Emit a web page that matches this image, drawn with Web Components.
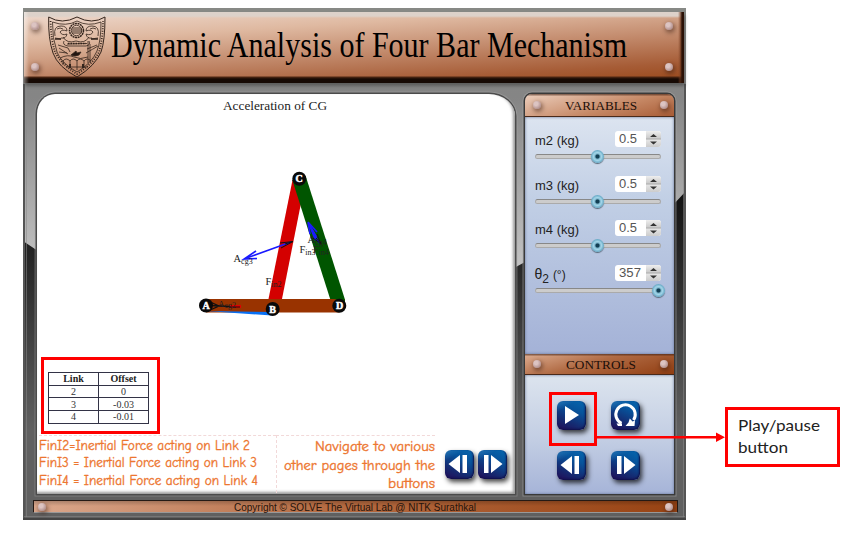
<!DOCTYPE html>
<html lang="en">
<head>
<meta charset="utf-8">
<title>Dynamic Analysis of Four Bar Mechanism</title>
<style>
html,body{margin:0;background:#fff;width:845px;height:534px;overflow:hidden}
</style>
</head>
<body>
<lab-page></lab-page>
<script>
const define = (name, html, setup) => customElements.define(name, class extends HTMLElement {
  connectedCallback() {
    if (this.shadowRoot) return;
    const t = document.createElement('template');
    t.innerHTML = typeof html === 'function' ? html(this) : html;
    this.attachShadow({mode: 'open'}).append(t.content.cloneNode(true));
  }
});
const at = (el, n, d) => el.getAttribute(n) ?? d;

/* One line of text set to an exact width. */
define('fit-text', el => `<style>:host{display:block;width:${at(el,'w')}px;height:${at(el,'h')}px;flex:none}svg{display:block;overflow:visible}</style>
<svg width="${at(el,'w')}" height="${at(el,'h')}"><text x="0" y="${at(el,'base')}" font-size="${at(el,'size')}" fill="currentColor" stroke="currentColor" stroke-width="${at(el,'heavy','0')}" textLength="${at(el,'w')}" lengthAdjust="spacingAndGlyphs">${at(el,'text')}</text></svg>`);

define('metal-rivet', `<style>:host{display:block;width:8px;height:8px;border-radius:50%;flex:none;background:radial-gradient(circle at 38% 35%,#dcc4c2 0 25%,#bd9e9c 60%,#8f7472);box-shadow:1px 2px 4px 1px #3a1c1080}</style>`);

define('nitk-crest', `<style>:host{display:block;width:58px;height:63px;flex:none}svg{display:block}</style>
<svg width="58" height="63" viewBox="0 0 58 63" fill="none" stroke="#33241c" stroke-width=".8">
<path d="M.7 1Q14 9 29 1Q44 9 57 1Q57 25 53 36Q47 50 29 61Q10 51 5 37Q0 22 .7 1Z" stroke-width="1"/>
<path d="M4.500 6Q18 11 29 5Q40 11 53 6Q53 25 49 35Q44 47 29 56Q13 47 9 36Q4 22 4.500 6Z"/>
<path d="M2.600 5Q3 24 7 36Q13 48 29 58Q44 49 51 36Q55 22 55 5" stroke-width="1.800" stroke-dasharray="1 1.500"/>
<circle cx="28.500" cy="14.500" r="7" stroke-width="1.500" stroke-dasharray="2 .6"/><circle cx="28.500" cy="14.500" r="5.200"/>
<path d="M25 11v7M27 11v7M29 11v7M31 11v7M33 12v5" stroke-width=".9"/>
<path d="M7 20q-2-10 6-10q6 0 6 5q-5-2-7 1q2 4 7 2q-1 5-6 4M50 20q2-10-6-10q-6 0-6 5q5-2 7 1q-2 4-7 2q1 5 6 4M7 22l6 1M43 23l7-1M9 13q3-2 6 0M42 13q3-2 6 0"/>
<path d="M7 23h6M43 23h7" stroke-width="1.500"/>
<path d="M15 21q4 7 13 4q9 3 13-4M16 25q-2 4 4 5h18q5-1 3-5M19 28l20-.5"/>
<path d="M20 27.500h18" stroke-width="1.300" stroke-dasharray="1.500 1"/>
<path d="M10 29l10 3 2 4M11 32l9 6M38 37q7-4 12-7M39 33l10-4M40 25v22M42 28v18M11 36l8 1"/>
<path d="M23 39l5-4 1 2 4-1-2 3q-4 2-8 0Z" fill="#221510"/>
<path d="M12 42q8-4 14-1t14 0M15 45q3-4 7 0q3-4 7 0q3-4 7 0q3-4 7 0M15 49v-4M18 51h22M22 45v7M29 45v9M36 45v7"/>
<path d="M22 48v4M35 48v4" stroke-width="2"/>
</svg>`);

define('lab-header', `<style>:host{box-sizing:border-box;display:flex;width:660px;height:71px;flex:none;padding:4px 9px 5px 5px;color:#000;background:
linear-gradient(90deg,#ffffff66,#ffffff00 5px),
linear-gradient(270deg,#2a1005 0 2px,#7a402488 4px,#ffffff00 6px),
linear-gradient(#ddd2ca 0 4px,#ffffff00 6px 64px,#4f2814 65px,#170a04 67px),
linear-gradient(176.500deg,#efdbd0 0,#dfb9a1 28%,#c38b6d 55%,#a65c36 82%,#984718);box-shadow:1px 3px 3px #2226}
.r{display:flex;flex-direction:column;justify-content:space-between;width:10px;padding:6px 0 7px 2px}
nitk-crest{margin-left:7px}fit-text{margin:10px 0 0 5px;font-family:"Liberation Serif",serif}
.e{margin-left:auto;padding-right:1px;width:9px}</style>
<div class="r"><metal-rivet></metal-rivet><metal-rivet></metal-rivet></div><nitk-crest></nitk-crest>
<fit-text w="516" h="44" base="31" size="36" text="Dynamic Analysis of Four Bar Mechanism"></fit-text>
<div class="r e"><metal-rivet></metal-rivet><metal-rivet></metal-rivet></div>`);

const icons = {
  play: '<path d="M8 5v18l14-9Z"/>',
  prev: '<path d="M15 5v18L3.500 14ZM17.500 5h4.500v18h-4.500Z"/>',
  next: '<path d="M13 5v18l11.500-9ZM6 5h4.500v18H6Z"/>',
  reset: '<path d="M10.500 22.300A9.700 9.700 0 1 1 22.500 19" fill="none" stroke="#fff" stroke-width="3"/><path d="M14.500 25H23.500L24 19.500L21.500 20.500L18.800 17.500L17.500 21.500Z"/><path d="M5.500 22.500H11V25H7Z"/>'
};
define('icon-button', el => `<style>:host{display:block;width:29px;height:29px;border-radius:6px;flex:none;background:linear-gradient(150deg,#2674b4,#ffffff00 25%),linear-gradient(25deg,#230b55 0,#152b72 32%,#07539b 67%,#0668b0);box-shadow:2px 3px 5px #000b,inset -1px -1px 2px #10104a}svg{display:block}</style><svg width="29" height="29" viewBox="0 0 29 29" fill="#fff">${icons[at(el,'icon')]}</svg>`);

define('offset-table', `<style>:host{box-sizing:border-box;display:block;width:119px;height:77px;border:3px solid #f00;padding:12px 0 0 4px;font:10px/11px "Liberation Serif",serif;color:#333}
table{border-collapse:collapse;table-layout:fixed;width:101px}td,th{border:1px solid #333346;padding:0;height:11.700px;text-align:center;line-height:11px}th{color:#222}</style>
<table><tr><th>Link</th><th>Offset</th></tr><tr><td>2</td><td>0</td></tr><tr><td>3</td><td>-0.03</td></tr><tr><td>4</td><td>-0.01</td></tr></table>`);

define('linkage-diagram', `<style>:host{display:block;height:241px;flex:none}svg{display:block}text{font-family:"Liberation Serif",serif}</style>
<svg width="478" height="241" viewBox="37 116 478 241">
<path d="M268.300 300L292.500 180L306 178L281.800 300Z" fill="#d40000"/>
<path d="M299 178L337.800 300" stroke="#005500" stroke-width="14"/>
<path d="M206 299H345V305L339 312.500H206Z" fill="#993300"/><path d="M330.500 298H344.500L345 301L344 304L338 300Z" fill="#005500"/>
<path d="M206 311L272 312V315.500Z" fill="#0870f5"/>
<g fill="none" stroke="#1a1aff" stroke-width="1.600"><path d="M291 242L244 259M256 251L244 259L257 258.500M308 222L319 243M308 222L310 234M308 222L317 232"/><path d="M309 224l7 12-1 3Z" fill="#1a1aff"/></g>
<g fill="none" stroke="#111" stroke-width="1"><path d="M293 241.500L280 243M293 241.500L281 248M285 244l8-2.500M321 244l-4-10M321 244l-8-6M316 238l5 6"/><path d="M208 301L219 306L208 311M210 305.500L240 307" stroke-width="1.300"/></g>
<path d="M230 306.500H241" stroke="#e00000" stroke-width="3"/><path d="M229 307H240" stroke="#211" stroke-width="1"/>
<g fill="#222" font-size="10.500"><text x="233.500" y="262">A<tspan font-size="8" dy="2">cg3</tspan></text><text x="265.500" y="285">F<tspan font-size="8" dy="2">in2</tspan></text><text x="299.500" y="253">F<tspan font-size="8" dy="2">in3</tspan></text><text x="313" y="253">F<tspan font-size="8" dy="2">in4</tspan></text><text x="307.500" y="243">A<tspan font-size="8" dy="2">cg4</tspan></text><text x="218" y="307" font-size="9">A<tspan font-size="8" dy="1">cg2</tspan></text></g>
<g fill="#090909"><circle cx="206" cy="305.500" r="7"/><circle cx="272.700" cy="309" r="7"/><circle cx="299.300" cy="178.700" r="7"/><circle cx="339.300" cy="305.700" r="7"/></g>
<g fill="#fff" stroke="#fff" stroke-width=".5" font-size="10" font-weight="bold" text-anchor="middle"><text x="206" y="309">A</text><text x="272.700" y="312.500">B</text><text x="299" y="182">C</text><text x="339.500" y="309">D</text></g>
</svg>`);

define('sim-screen', `<style>:host{box-sizing:border-box;display:flex;flex-direction:column;width:478px;height:400px;background:#fff;border-radius:18px 26px 0 0/20px 22px 0 0;box-shadow:0 0 0 1.500px #4b4b4b,0 0 0 2.500px #aaa6,inset -2px -2px 3px #999;overflow:hidden}
.t{margin:0 auto;height:22px;flex:none;color:#222;font-family:"Liberation Serif",serif;position:relative;left:-1px}
offset-table{margin-left:4px;flex:none}
.b{display:flex;margin:1px 0 0 2px;color:#ed7630;font-family:"Comic Sans MS","Comic Neue","Open Sans",sans-serif}
.l{width:237px;border-top:1px dashed #f2d9d9}.m{width:158px;border-top:1px dashed #f2d9d9;border-left:1px dashed #f2d9d9;display:flex;flex-direction:column;align-items:flex-end;height:57px}
.n{display:flex;gap:4px;padding:15px 0 0 10px}.l fit-text:first-child{margin-top:1px}</style>
<div class="t"><fit-text w="104" h="22" base="15.500" size="12.500" text="Acceleration of CG"></fit-text></div>
<linkage-diagram></linkage-diagram><offset-table></offset-table>
<div class="b"><div class="l"><fit-text heavy=".35" w="211" h="17.300" base="13" size="13.500" text="FinI2=Inertial Force acting on Link 2"></fit-text><fit-text heavy=".35" w="218" h="17.300" base="13" size="13.500" text="FinI3 = Inertial Force acting on Link 3"></fit-text><fit-text heavy=".35" w="219" h="17" base="13" size="13.500" text="FinI4 = Inertial Force acting on Link 4"></fit-text></div>
<div class="m"><fit-text heavy=".35" w="120" h="18.500" base="15" size="14" text="Navigate to various"></fit-text><fit-text heavy=".35" w="151" h="18.500" base="15" size="14" text="other pages through the"></fit-text><fit-text heavy=".35" w="47" h="18.500" base="15" size="14" text="buttons"></fit-text></div>
<div class="n"><icon-button icon="prev"></icon-button><icon-button icon="next"></icon-button></div></div>`);

define('panel-title', el => `<style>:host{box-sizing:border-box;display:flex;align-items:center;justify-content:space-between;height:${at(el,'h')}px;padding:0 6px 0 8px;flex:none;color:#1c0f0a;font-family:"Liberation Serif",serif;border-bottom:1.500px solid #4a2a1a;background:linear-gradient(#3d1d1088 0 1px,#fff0 2px),linear-gradient(165deg,${at(el,'c')})}</style>
<metal-rivet></metal-rivet><fit-text w="${at(el,'w')}" h="18" base="14" size="13" text="${at(el,'text')}"></fit-text><metal-rivet></metal-rivet>`);

define('value-slider', el => `<style>:host{display:block;height:44.500px;width:127px;font-family:"Liberation Sans",sans-serif;color:#222}
.r{display:flex;justify-content:space-between;height:16px}.v{display:flex;width:46px;background:#fff;border-radius:3px;height:16px;color:#555;margin-right:1px}.v fit-text{margin-left:4px}
.s{margin-left:auto;width:15px;height:16px;border-radius:0 3px 3px 0;background:linear-gradient(#eee,#ccc 7px,#aaa 8px,#e5e5e5 9px,#ccc)}svg{display:block}
.k{margin-top:7px;border-radius:3px;background:#ccc;border:1px solid #aaa;border-top-color:#888;display:flex;align-items:center;padding-left:${at(el,'pos')}px;box-sizing:border-box;height:5px;width:126px}
i{display:block;flex:none;width:13px;height:13px;border-radius:50%;background:radial-gradient(#123f54 0 1.500px,#7fb8cf 2.700px,#a3d5e8 4px,#6fafca 6px);box-shadow:0 1px 1px #567}</style>
<div class="r"><div><slot></slot></div><div class="v"><fit-text w="${at(el,'vw')}" h="16" base="12" size="12.500" text="${at(el,'val')}"></fit-text><div class="s"><svg width="15" height="16" fill="#333"><path d="M4 6L7.500 3L11 6ZM4 10.500H11L7.500 13.500Z"/></svg></div></div></div><div class="k"><i></i></div>`);

define('variables-panel', `<style>:host{box-sizing:border-box;display:block;height:237px;padding:14px 0 0 9.500px;background:linear-gradient(#dce4f0,#c1cfe5 35%,#a4b2d7);box-shadow:inset 0 0 3px #607090}sub{font-size:12px;line-height:0}.th{font:14px/18px "Liberation Sans",sans-serif;display:block}</style>
<value-slider pos="55" val="0.5" vw="18"><fit-text w="44" h="16" base="13.500" size="13.500" text="m2 (kg)"></fit-text></value-slider>
<value-slider pos="55" val="0.5" vw="18"><fit-text w="44" h="16" base="13.500" size="13.500" text="m3 (kg)"></fit-text></value-slider>
<value-slider pos="55" val="0.5" vw="18"><fit-text w="44" h="16" base="13.500" size="13.500" text="m4 (kg)"></fit-text></value-slider>
<value-slider pos="116" val="357" vw="22"><span class="th">θ<sub>2</sub> <span style="font-size:12px">(°)</span></span></value-slider>`);

define('controls-panel', `<style>:host{box-sizing:border-box;display:grid;height:119px;grid-template:29px 29px/29px 29px;gap:21px 25px;padding:26px 0 0 32px;background:linear-gradient(#dce4ee,#c2cde3 55%,#a6b4d8);box-shadow:inset 0 0 3px #607090}</style>
<icon-button icon="play"></icon-button><icon-button icon="reset"></icon-button><icon-button icon="prev"></icon-button><icon-button icon="next"></icon-button>`);

define('side-panel', `<style>:host{display:block;width:149px;height:400px;border-radius:7px 7px 0 0;overflow:hidden;box-shadow:0 0 0 1.500px #393939,0 0 0 2.500px #aaa8}</style>
<panel-title h="23" w="72" c="#edd0bf,#c58764 60%,#a85c36" text="VARIABLES"></panel-title><variables-panel></variables-panel><panel-title h="21" w="70" c="#ddad91,#b06a43 45%,#913e12" text="CONTROLS"></panel-title><controls-panel></controls-panel>`);

define('lab-footer', `<style>:host{box-sizing:border-box;display:flex;align-items:center;justify-content:space-between;width:645px;height:13px;flex:none;margin:6px 0 0 9px;padding:0 4px;color:#26140c;font-family:"Liberation Sans",sans-serif;border:1.500px solid #251a15;border-bottom-color:#999;background:linear-gradient(#0003,#fff0 5px),linear-gradient(90deg,#dba88d,#b66c43 45%,#984313)}fit-text{margin-right:2px}</style>
<metal-rivet></metal-rivet><fit-text w="242" h="12" base="9.500" size="10.800" text="Copyright © SOLVE The Virtual Lab @ NITK Surathkal"></fit-text><metal-rivet></metal-rivet>`);

define('lab-frame', `<style>:host{box-sizing:border-box;position:relative;display:flex;flex-direction:column;width:663px;height:512px;padding:4px 0 0 1px;z-index:0}
.bg{position:absolute;inset:0;z-index:-1}.row{display:flex;gap:10px;margin:11px 0 0 13px}</style>
<svg class="bg" width="663" height="512" viewBox="23 8 663 512"><defs><linearGradient id="a" gradientUnits="userSpaceOnUse" x1="0" x2="0" y1="8" y2="265"><stop stop-color="#878985"/><stop offset=".35" stop-color="#858585"/><stop offset="1" stop-color="#c2c2c2"/></linearGradient><linearGradient id="b" gradientUnits="userSpaceOnUse" x1="0" x2="0" y1="190" y2="430"><stop stop-color="#111"/><stop offset=".35" stop-color="#2b2b2b"/><stop offset="1" stop-color="#606060"/></linearGradient></defs>
<path d="M23 8H686V520H23Z" fill="url(#a)"/><path d="M23 241L38 251V268H514L525 262V210L673 205L686 191V520H23Z" fill="url(#b)"/>
<path d="M24 84V519M685 84V519" stroke="#555" stroke-width="2"/><path d="M26.500 84V517M683.500 84V517M24 516.500H685" stroke="#8888" fill="none"/><path d="M23 519H686" stroke="#444" stroke-width="2"/></svg>
<lab-header></lab-header><div class="row"><sim-screen></sim-screen><side-panel></side-panel></div><lab-footer></lab-footer>`);

/* Call-out drawn over the simulator, pointing at the play button. */
define('play-callout', `<style>:host{position:absolute;left:549px;top:392px;display:flex;width:291px;height:76px;color:#222;font-family:Lato,"Open Sans",sans-serif}
.p{box-sizing:border-box;width:48px;height:54px;border:3px solid #f00}svg{display:block}.c{box-sizing:border-box;margin-top:15px;width:115px;height:60px;border:3px solid #f00;background:#fff;padding:5px 0 0 10px}</style>
<div class="p"></div><svg width="128" height="76"><path d="M0 44H120V46.500H0ZM119 40.500L128 45.200L119 50Z" fill="#f00"/></svg><div class="c"><fit-text w="82" h="22" base="16" size="16" text="Play/pause"></fit-text><fit-text w="50" h="22" base="16" size="16" text="button"></fit-text></div>`);

define('lab-page', `<style>:host{display:block;position:relative;box-sizing:border-box;width:845px;height:534px;padding:8px 0 0 23px}</style><lab-frame></lab-frame><play-callout></play-callout>`);
</script>
</body>
</html>
